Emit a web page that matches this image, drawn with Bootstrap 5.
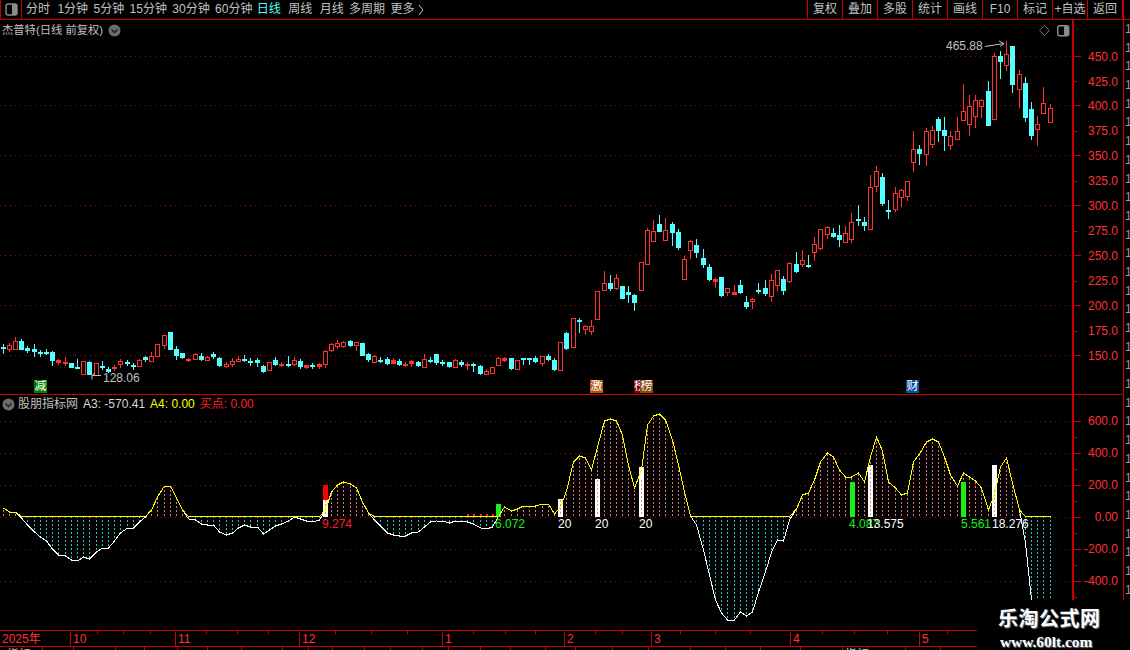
<!DOCTYPE html>
<html lang="zh">
<head>
<meta charset="utf-8">
<title>杰普特</title>
<link href="https://cdn.jsdelivr.net/npm/bootstrap@5.3.0/dist/css/bootstrap.min.css" rel="stylesheet">
<style>
html,body{background:#000;margin:0;overflow:hidden}
.stage{width:1130px;height:650px;position:relative;overflow:hidden;background:#000;color:#c0c0c0;font:12px/14px "Liberation Sans","Noto Sans CJK SC",sans-serif}
.topbar{height:20px;border-bottom:1px solid #c80000}
.layout-box{width:22px;height:19px;border-right:1px solid #c80000;border-left:1px solid #c80000}
.periods{gap:5.4px;padding-left:4px}
.periods span{line-height:19px;white-space:nowrap}
.periods .now{color:#54ffff}
.periods .wider{margin-left:2px}
.periods .first-wider{margin-left:2px}
.periods .now{margin-left:-1px}
.periods .chev{margin-left:-2px}
.tool-cell{width:35px;height:19px;border-left:1px solid #c80000;color:#c0c0c0;font-size:12px;line-height:19px;padding:0;text-align:center;white-space:nowrap;background:none;border-top:0;border-right:0;border-bottom:0;border-radius:0}
.tool-end{width:7px;height:19px;border-left:1px solid #c80000}
.chart-body{height:627px}
.chart-col{width:1123px}
.price-pane{height:375px;border-bottom:1px solid #c80000}
.ind-pane{height:235px}
.pane-svg{display:block;width:1123px}
.pane-head{position:absolute;left:2px;top:3px;gap:5px;white-space:nowrap;height:14px}
.pane-title{font-size:11.3px}
.ind-head{top:2px;gap:5px}
.ind-head .head-icon{margin-right:-2px}
.side-strip{width:7px;border-left:1px solid #c80000;overflow:hidden;height:580px}
.side-row{height:18.7px;line-height:18px;padding-left:1px;color:#9a9a9a;font-size:12px;overflow:hidden;white-space:nowrap}
.date-bar{height:17px;border-top:1px solid #c80000;border-bottom:1px solid #c80000;width:978px;position:relative;color:#ff3232}
.date-bar b{position:absolute;top:1px;font-weight:400;line-height:14px;padding-left:2px;height:14px;border-left:1px solid #c80000}
.date-bar i{position:absolute;top:0;width:1px;height:3px;background:#c80000}
.tab-row{height:4px;position:relative;width:978px;overflow:hidden}
.tab-row u{position:absolute;top:0;width:1px;height:4px;background:#c80000}
.tab-row em{position:absolute;top:1px;font-style:normal;line-height:14px}
.mark-tag{position:absolute;top:380px;width:13px;height:13px;color:#fff;line-height:13px;text-align:center;font-size:12px;overflow:hidden}
.watermark{position:absolute;left:977px;top:600px;width:153px;height:50px;background:#000;text-align:center}
.wm-cn{position:absolute;left:21px;top:5px;color:#fff;font:700 20px/26px "Noto Sans CJK SC",sans-serif;letter-spacing:.5px;text-shadow:1px 1px 1px #777}
.wm-en{position:absolute;left:23px;top:33px;color:#fff;font:700 15.4px/18px "Liberation Serif",serif;text-shadow:1px 1px 1px #777;white-space:nowrap}
.sv-label{font:12px "Liberation Sans",sans-serif}
</style>
</head>
<body>
<div class="stage">
  <nav class="topbar d-flex align-items-start">
    <div class="layout-box d-flex align-items-center justify-content-center">
      <svg width="13" height="13" viewBox="0 0 13 13"><rect x="1" y="1" width="11" height="11" rx="2" fill="none" stroke="#8c8c8c" stroke-width="1.4"/><rect x="7" y="1" width="5" height="11" rx="1" fill="#8c8c8c"/></svg>
    </div>
    <div class="periods d-flex flex-grow-1">
      <span>分时</span><span class="first-wider">1分钟</span><span>5分钟</span><span>15分钟</span><span>30分钟</span><span>60分钟</span><span class="now">日线</span><span class="wider">周线</span><span class="wider">月线</span><span>多周期</span><span>更多</span>
      <svg width="6" height="12" viewBox="0 0 6 12" class="chev mt-1"><path d="M1 1l4 5-4 5" fill="none" stroke="#c0c0c0"/></svg>
    </div>
    <div class="d-flex">
      <button class="btn tool-cell">复权</button><button class="btn tool-cell">叠加</button><button class="btn tool-cell">多股</button><button class="btn tool-cell">统计</button><button class="btn tool-cell">画线</button><button class="btn tool-cell">F10</button><button class="btn tool-cell">标记</button><button class="btn tool-cell">+自选</button><button class="btn tool-cell">返回</button><div class="tool-cell" style="width:1px"></div><div class="tool-end"></div>
    </div>
  </nav>

  <div class="chart-body d-flex">
    <div class="chart-col">
      <section class="price-pane position-relative">
        <svg id="priceSvg" class="pane-svg" height="374" viewBox="0 20 1123 374"></svg>
        <div class="pane-head d-flex align-items-center">
          <span class="pane-title">杰普特(日线 前复权)</span>
          <svg width="13" height="13" viewBox="0 0 13 13"><circle cx="6.5" cy="6.5" r="6" fill="#6c6c6c"/><path d="M3.5 5.5l3 3 3-3" fill="none" stroke="#1c1c1c" stroke-width="1.4"/></svg>
        </div>
      </section>
      <section class="ind-pane position-relative">
        <svg id="indSvg" class="pane-svg" height="235" viewBox="0 395 1123 235"></svg>
        <div class="pane-head ind-head d-flex align-items-center">
          <svg class="head-icon" width="13" height="13" viewBox="0 0 13 13"><circle cx="6.5" cy="6.5" r="6" fill="#6c6c6c"/><path d="M3.5 5.5l3 3 3-3" fill="none" stroke="#1c1c1c" stroke-width="1.4"/></svg>
          <span>股朋指标网</span>
          <span style="color:#d8d8d8">A3: -570.41</span>
          <span style="color:#ffff00">A4: 0.00</span>
          <span style="color:#ff2020">买点: 0.00</span>
        </div>
      </section>
      <div class="date-bar" id="dateBar">
        <b style="left:0;border:0">2025年</b><b style="left:70px">10</b><b style="left:175px">11</b><b style="left:299px">12</b><b style="left:442px">1</b><b style="left:564px">2</b><b style="left:651px">3</b><b style="left:790px">4</b><b style="left:919px">5</b>
      </div>
      <div class="tab-row" id="tabRow"><em style="left:7px">指标</em><em style="left:845px;color:#54ffff">指标</em></div>
    </div>
    <aside class="side-strip" id="sideStrip"></aside>
  </div>

  <span class="mark-tag" style="left:34px;background:#008000">减</span>
  <span class="mark-tag" style="left:590px;background:#b8560f">激</span>
  <span class="mark-tag" style="left:634px;background:#8a0000;width:8px;text-align:left">榜</span>
  <span class="mark-tag" style="left:640px;background:#8a4a08">榜</span>
  <span class="mark-tag" style="left:906px;background:#0a4f9c">财</span>

  <div class="watermark">
    <div class="wm-cn">乐淘公式网</div>
    <div class="wm-en">www.60lt.com</div>
  </div>
</div>

<script src="https://cdn.jsdelivr.net/npm/bootstrap@5.3.0/dist/js/bootstrap.bundle.min.js"></script>
<script>
// type (r/c), body top, body bottom, wick high, wick low
var K=[
"c347,348,344,353","r345,349,343,351","r341,349,337,349","c341,349,339,349","c348,350,346,352","c349,351,344,356","c352,353,350,356","c352,353,349,354","c352,360,351,365","R360,362,359,364",
"R362,363,357,365","c363,367,363,367","c367,368,359,368","r361,374,361,374","c362,374,361,374","r363,375,363,375","c366,367,361,369","c369,371,367,372","R367,368,365,370","r361,364,359,367",
"c362,363,360,365","c365,366,363,369","r360,366,359,366","c357,359,356,361","r356,361,352,361","r344,356,344,356","r335,345,335,348","c332,349,332,349","c349,355,346,359","c353,357,353,358",
"R359,360,358,361","r354,359,353,359","c356,359,353,360","r357,360,356,360","c354,356,352,358","c358,365,357,366","r364,366,362,367","r361,364,358,366","r359,361,356,361","c359,360,355,361",
"c361,362,358,365","c360,362,358,366","c366,371,365,372","r362,370,362,370","c360,364,357,365","R364,365,362,366","c364,365,356,366","r360,364,357,365","c361,366,359,368","R365,367,365,368",
"c365,366,363,368","R364,366,363,368","r351,364,350,367","r344,350,343,351","r343,346,340,348","r342,346,341,347","c341,345,340,346","r342,345,342,350","c343,355,343,355","c354,359,353,361",
"r356,362,355,362","c360,361,357,362","c359,363,357,364","R360,363,358,363","c361,364,359,365","R364,365,362,366","R361,363,360,366","c362,365,361,366","r359,367,354,367","c360,361,357,362",
"c354,362,354,364","c362,363,360,365","c362,366,362,367","r360,367,359,367","c362,364,360,366","R364,365,362,369","c364,365,363,371","c366,373,365,374","r371,374,369,374","r367,373,367,373",
"r358,365,357,365","R358,360,357,361","c358,368,358,369","r360,369,360,369","c358,359,358,364","c358,359,358,364","c358,361,356,362","r356,363,356,365","c356,359,354,360","c360,369,358,370",
"r342,370,342,370","c333,348,332,349","r318,347,318,347","c320,321,318,332","r326,329,325,334","r326,331,320,334","r291,319,291,319","r283,290,271,290","c283,288,275,290","r278,288,274,289",
"c286,298,286,298","c292,294,286,302","c295,302,294,310","r262,290,262,290","r230,264,228,264","r231,241,220,241","c224,231,215,231","r230,240,218,240","c224,232,222,245","c232,247,229,249",
"r259,279,256,279","r241,250,240,258","c245,252,239,257","c258,264,249,267","c267,279,264,280","R279,281,278,287","c277,295,277,296","r288,292,288,295","R292,294,285,294","c285,292,280,293",
"c302,306,296,308","r299,301,298,308","c290,291,283,293","c288,293,280,295","r280,296,274,301","r270,285,270,290","c279,290,276,294","r263,281,262,282","c264,271,252,272","r260,264,250,266",
"c265,266,255,267","r244,252,237,260","r229,248,229,249","r227,234,226,238","c233,236,228,237","c235,239,225,246","r233,242,226,242","r222,239,213,242","c219,220,205,225","c222,225,217,230",
"r187,229,175,229","r171,186,166,191","c177,203,173,205","c210,211,200,218","r193,209,187,211","r190,197,189,206","r181,196,181,200","r149,162,131,171","c149,153,145,164","r131,154,128,165",
"r130,144,126,147","c119,130,117,141","c130,135,117,150","r136,145,131,149","r131,139,117,139","r111,120,84,120","r106,124,95,135","r100,116,95,127","r100,106,99,117","c91,125,81,125",
"r56,119,53,119","c56,61,51,78","r54,65,41,70","c46,84,46,92","r74,89,70,107","c83,117,77,121","c109,135,102,139","r124,129,116,145","r103,113,87,113","r108,122,104,122"];
var V=[508,512,512,518,525,532,537,541,549,555,556,560,561,557,559,552,548,548,541,533,528,528,522,517,510,497,486,486,498,510,519,520,524,525,525,532,535,533,528,525,527,527,534,530,526,524,521,517,519,521,522,520,510,492,485,482,484,488,502,513,520,526,533,535,536,536,533,532,527,522,521,521,523,521,521,522,524,528,529,527,516.5,507,511,509,506,506,506,504,504,514,507,491,462,456,458,470,447,421,419,421,435,465,488,470,425,416,414,420,440,465,492,516,525,550,575,600,613,620,620,612,616,612,592,572,552,540,541,520,509,495,493,480,462,453,457,470,477,477,473,482,457,437,451,482,488,495,493,462,454,442,439,442,457,475,486,473,477,481,488,510,494,467,458,483,510,543,600,660,720,780];
var RED="#ff3232",CY="#54ffff",LINE="#c80000",GRID="#a00000";
function px(i){return 3+Math.floor(i*6.195+0.1)}
function grid(ys){var s="";ys.forEach(function(y){s+='<line x1="0" x2="1072" y1="'+(y+.5)+'" y2="'+(y+.5)+'" stroke="'+GRID+'" stroke-dasharray="1 4"/>'});return s}
function ticks(list,len){var s="";list.forEach(function(y){s+='<line x1="1073" x2="'+(1073+len)+'" y1="'+(y+.5)+'" y2="'+(y+.5)+'" stroke="'+LINE+'"/>'});return s}
function label(t,y,c){return '<text class="sv-label" x="1118" y="'+y+'" text-anchor="end" fill="'+(c||RED)+'">'+t+'</text>'}
// ---------- price pane
var p='<g shape-rendering="crispEdges">';
var gy=[56,105,155,205,255,305,355];
p+=grid(gy)+ticks(gy,8)+ticks([81,131,181,231,281,331],4);
p+='<rect x="1072" y="20" width="2" height="374" fill="'+LINE+'"/>';
K.forEach(function(k,i){
  var t=k[0],a=k.slice(1).split(",").map(Number),x=px(i),c=(t==="c")?CY:RED;
  p+='<line x1="'+(x+.5)+'" x2="'+(x+.5)+'" y1="'+a[2]+'" y2="'+(a[3]+1)+'" stroke="'+c+'"/>';
  if(t==="r"){p+='<rect x="'+(x-1.5)+'" y="'+(a[0]+.5)+'" width="4" height="'+(a[1]-a[0])+'" fill="#000" stroke="'+RED+'"/>'}
  else{p+='<rect x="'+(x-2)+'" y="'+a[0]+'" width="5" height="'+(a[1]-a[0]+1)+'" fill="'+c+'"/>'}
});
p+='</g>';
[["450.0",61],["425.0",86],["400.0",110],["375.0",135],["350.0",160],["325.0",185],["300.0",210],["275.0",235],["250.0",260],["225.0",285],["200.0",310],["175.0",335],["150.0",360]].forEach(function(l){p+=label(l[0],l[1])});
p+='<text class="sv-label" x="946" y="50" fill="#c0c0c0">465.88</text><path d="M985 46.5l19-3M999 41l5 2.500-4 3" fill="none" stroke="#c0c0c0"/>';
p+='<text class="sv-label" x="103" y="382" fill="#c0c0c0">128.06</text><path d="M101 375.500H92M92 375.500l3-2.500M92 375.500v4" fill="none" stroke="#c0c0c0"/>';
p+='<path d="M1044.500 25.500l5 5-5 5-5-5z" fill="none" stroke="#6a6a6a"/>';
p+='<rect x="1057.700" y="25.700" width="11" height="10" rx="2" fill="none" stroke="#8c8c8c" stroke-width="1.400"/><rect x="1064" y="26" width="5" height="9" rx="1" fill="#8c8c8c"/>';
document.getElementById("priceSvg").innerHTML=p;
// ---------- indicator pane
var q='<g shape-rendering="crispEdges">';
var iy=[421,453,485,517,549,581];
q+=grid(iy)+ticks(iy,8)+ticks([437,469,501,533,565,597],4);
q+='<rect x="1072" y="395" width="2" height="235" fill="'+LINE+'"/>';
V.forEach(function(v,i){
  var x=px(i)+.5, up=v<516.5;
  q+='<line x1="'+x+'" x2="'+x+'" y1="516" y2="'+v+'" stroke="'+(up?"#e87070":"#1cc4c4")+'" stroke-dasharray="2 2"/>';
});
for(var j=75;j<80;j++){q+='<rect x="'+(px(j))+'" y="514" width="2" height="3" fill="#ff2020"/>'}
[[323,485,500,"#ff0000"],[323,500,517,"#fff"],[496,504,517,"#18ee18"],[558,499,517,"#fff"],[595,479,517,"#fff"],[639,467,517,"#fff"],[850,482,517,"#18ee18"],[868,465,517,"#fff"],[961,482,517,"#18ee18"],[992,465,517,"#fff"]].forEach(function(b){
  q+='<rect x="'+b[0]+'" y="'+b[1]+'" width="5" height="'+(b[2]-b[1])+'" fill="'+b[3]+'"/>';
});
[[325,500],[870,465],[994,490],[641,480],[560,500],[597,480]].forEach(function(b){q+='<line x1="'+(b[0]+.5)+'" x2="'+(b[0]+.5)+'" y1="'+b[1]+'" y2="516" stroke="#ff8080" stroke-dasharray="2 2"/>'});
var white="",yel="";
V.forEach(function(v,i){var x=px(i)+.5;white+=(i?"L":"M")+x+" "+v;yel+=(i?"L":"M")+x+" "+Math.min(v,516.5)});
q+='<path d="'+white+'" fill="none" stroke="#fff"/><path d="'+yel+'" fill="none" stroke="#ffff00"/></g>';
[["600.0",425],["400.0",457],["200.0",489],["0.00",521],["-200.0",553],["-400.0",585]].forEach(function(l){q+=label(l[0],l[1])});
[["9.274",322,"#ff2020"],["6.072",495,"#18ee18"],["20",558,"#fff"],["20",595,"#fff"],["20",639,"#fff"],["4.087",849,"#18ee18"],["13.575",867,"#fff"],["5.561",961,"#18ee18"],["18.276",992,"#fff"]].forEach(function(t){
  q+='<text class="sv-label" x="'+t[1]+'" y="528" fill="'+t[2]+'">'+t[0]+'</text>';
});
document.getElementById("indSvg").innerHTML=q;
// ---------- date ticks, tabs, side strip
var d="";[97,123,150,206,237,268,335,371,407,473,505,535,595,622,680,715,750,822,854,887,947].forEach(function(x){d+='<i style="left:'+x+'px"></i>'});
document.getElementById("dateBar").insertAdjacentHTML("beforeend",d);
var r="";[42,73,115,144,177,207,241,282,308,332,364,390,422,448,480,510,545,575,612,648,690,725,760,800,842,868,905,940].forEach(function(x){r+='<u style="left:'+x+'px"></u>'});
document.getElementById("tabRow").insertAdjacentHTML("beforeend",r);
var s="";for(var n=0;n<31;n++){s+='<div class="side-row">1</div>'}
document.getElementById("sideStrip").innerHTML=s;
</script>
</body>
</html>
